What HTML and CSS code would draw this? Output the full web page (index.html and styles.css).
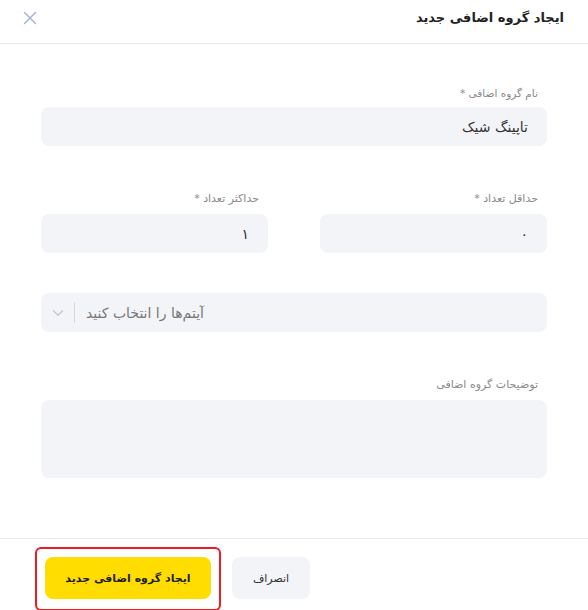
FILE: index.html
```html
<!DOCTYPE html>
<html lang="fa" dir="rtl">
<head>
<meta charset="utf-8">
<title>ایجاد گروه اضافی جدید</title>
<link rel="stylesheet" href="styles.css">
</head>
<body>
<div class="modal">
  <header class="modal-header">
    <h1 class="modal-title">ایجاد گروه اضافی جدید</h1>
    <button class="close-btn" aria-label="بستن">
      <svg width="14" height="14" viewBox="0 0 14 14"><path d="M1.5 1.5L12.5 12.5M12.5 1.5L1.5 12.5" stroke="#aab3d2" stroke-width="1.5" stroke-linecap="round" fill="none"/></svg>
    </button>
  </header>
  <main class="modal-body">
    <div class="field">
      <label class="label">نام گروه اضافی *</label>
      <div class="input">تاپینگ شیک</div>
    </div>
    <div class="row">
      <div class="field">
        <label class="label">حداقل تعداد *</label>
        <div class="input">۰</div>
      </div>
      <div class="field">
        <label class="label">حداکثر تعداد *</label>
        <div class="input">۱</div>
      </div>
    </div>
    <div class="select">
      <span class="chevron">
        <svg width="12" height="8" viewBox="0 0 12 8"><path d="M1.5 1.8L6 6.2L10.5 1.8" stroke="#c4c7cf" stroke-width="1.3" fill="none" stroke-linecap="round" stroke-linejoin="round"/></svg>
      </span>
      <span class="sep"></span>
      <span class="placeholder">آیتم‌ها را انتخاب کنید</span>
    </div>
    <div class="field field-desc">
      <label class="label">توضیحات گروه اضافی</label>
      <div class="textarea"></div>
    </div>
  </main>
  <footer class="modal-footer">
    <button class="btn btn-cancel">انصراف</button>
    <div class="highlight">
      <button class="btn btn-primary">ایجاد گروه اضافی جدید</button>
    </div>
  </footer>
</div>
</body>
</html>
```
FILE: styles.css
```css
* { box-sizing: border-box; }
html, body { margin: 0; padding: 0; background: #fff; }
body {
  font-family: "DejaVu Sans", "Noto Sans", sans-serif;
  color: #2b2b2b;
}
.modal {
  width: 588px;
  height: 610px;
  display: flex;
  flex-direction: column;
  background: #fff;
  overflow: hidden;
}
.modal-header {
  height: 44px;
  border-bottom: 1px solid #e7e9f2;
  display: flex;
  align-items: center;
  justify-content: space-between;
  padding: 0 24px 8px 23px;
}
.modal-title {
  margin: 0;
  font-size: 13px;
  font-weight: bold;
  color: #222;
}
.close-btn {
  border: none;
  background: none;
  padding: 0;
  width: 14px;
  height: 14px;
  display: flex;
  cursor: pointer;
}
.modal-body {
  flex: 1;
  padding: 41px 41px 0 41px;
  display: flex;
  flex-direction: column;
}
.field { display: flex; flex-direction: column; }
.label {
  font-size: 10.5px;
  line-height: 16px;
  color: #8a8a8a;
  padding-right: 9px;
  margin-bottom: 6px;
}
.input {
  height: 39px;
  background: #f3f4f8;
  border-radius: 8px;
  display: flex;
  align-items: center;
  padding: 0 19px;
  font-size: 14px;
  color: #333;
}
.row {
  margin-top: 45px;
  display: grid;
  grid-template-columns: 1fr 1fr;
  column-gap: 52px;
}
.row .label { margin-bottom: 7px; font-size: 11px; }
.select {
  margin-top: 40px;
  height: 39px;
  background: #f3f4f8;
  border-radius: 8px;
  display: flex;
  direction: ltr;
  align-items: center;
  padding: 0 0 0 11px;
}
.chevron { display: flex; width: 12px; }
.sep {
  width: 1px;
  height: 21px;
  background: #d6d8de;
  margin: 0 11px 0 10px;
}
.placeholder {
  direction: rtl;
  font-size: 14px;
  color: #777;
}
.field-desc { margin-top: 45px; }
.field-desc .label { margin-bottom: 7px; font-size: 11px; }
.textarea {
  height: 78px;
  background: #f3f4f8;
  border-radius: 8px;
}
.modal-footer {
  height: 72px;
  border-top: 1px solid #e7e9f2;
  display: flex;
  align-items: flex-start;
  justify-content: flex-start;
  padding: 8px 0 0 0;
  direction: ltr;
}
.highlight {
  order: 1;
  margin-left: 35px;
  border: 2px solid #ee1c1c;
  border-radius: 6px;
  padding: 8px;
  height: 64px;
}
.btn-cancel { order: 2; margin-left: 11px; margin-top: 10px; }
.btn {
  font-family: inherit;
  border: none;
  border-radius: 8px;
  height: 42px;
  cursor: pointer;
  direction: rtl;
}
.btn-cancel {
  width: 78px;
  background: #f3f4f8;
  color: #333;
  font-size: 11px;
}
.btn-primary {
  width: 166px;
  background: #ffdd00;
  color: #222;
  font-weight: bold;
  font-size: 11px;
}
```
